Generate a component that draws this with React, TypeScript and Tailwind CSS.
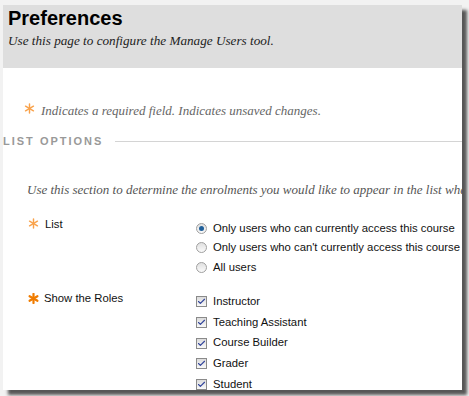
import { Check } from "lucide-react"

// Preferences page for the Manage Users tool, shown as a cropped page with a drop shadow.

const RADIOS = [
    { label: "Only users who can currently access this course", on: true },
    { label: "Only users who can't currently access this course", on: false },
    { label: "All users", on: false },
]

const ROLES = ["Instructor", "Teaching Assistant", "Course Builder", "Grader", "Student"]

const serif = "font-['Liberation_Serif','Times_New_Roman',serif]"
const sans = "font-['Liberation_Sans',Arial,sans-serif]"

// Orange six-armed asterisk; the "unsaved" one is lighter and thinner.
function Star({ solid }: { solid?: boolean }) {
    const color = solid ? "#f07c00" : "#f9a24a"
    const w = solid ? 2.4 : 1.6
    return (
        <svg width="11" height="11" viewBox="0 0 12 12" aria-hidden className="shrink-0">
            <g stroke={color} strokeWidth={w} strokeLinecap="round">
                <line x1="6" y1="1" x2="6" y2="11" />
                <line x1="1.7" y1="3.5" x2="10.3" y2="8.5" />
                <line x1="1.7" y1="8.5" x2="10.3" y2="3.5" />
            </g>
        </svg>
    )
}

function Radio({ on }: { on: boolean }) {
    return (
        <span className="flex h-[11px] w-[11px] shrink-0 items-center justify-center rounded-full border border-[#a0a0a0] bg-gradient-to-b from-[#e0e0e0] to-[#fafafa]">
            {on && <span className="h-[5px] w-[5px] rounded-full bg-[#1f5f9a]" />}
        </span>
    )
}

function Box() {
    return (
        <span className="flex h-[11px] w-[11px] shrink-0 items-center justify-center border border-[#8a8a8a] bg-gradient-to-b from-[#dcdcdc] to-[#f8f8f8]">
            <Check size={9} strokeWidth={3} className="text-[#30439a]" aria-hidden />
        </span>
    )
}

export default function App() {
    return (
        <div className="h-[396px] w-[469px] overflow-hidden bg-[#f2f2f2] pl-[3px] pt-[5px]">
            <div className="h-[385px] w-[459px] overflow-hidden bg-white shadow-[5px_5px_3px_rgba(60,60,60,0.85)]">
                {/* Header */}
                <div className="h-[63px] bg-[#dedede] px-[5px] pt-[1px]">
                    <h1 className={`${sans} text-[20px] font-bold leading-[24px] text-black`}>Preferences</h1>
                    <p className={`${serif} mt-[3px] text-[13.2px] italic leading-[16px] text-[#222]`}>
                        Use this page to configure the Manage Users tool.
                    </p>
                </div>

                {/* Required note */}
                <div className="mt-[35px] flex items-center gap-[6px] pl-[21px]">
                    <span className="-mt-[6px]"><Star /></span>
                    <span className={`${serif} text-[13px] italic leading-[16px] text-[#666]`}>
                        Indicates a required field. Indicates unsaved changes.
                    </span>
                </div>

                {/* Section heading */}
                <div className="mt-[14px] flex items-center gap-[12px]">
                    <span className={`${sans} shrink-0 text-[11px] font-bold tracking-[2px] text-[#999]`}>
                        LIST OPTIONS
                    </span>
                    <div className="h-px flex-1 bg-[#d4d4d4]" />
                </div>

                <p className={`${serif} mt-[32px] whitespace-nowrap pl-[24px] text-[13px] italic leading-[16px] text-[#555]`}>
                    Use this section to determine the enrolments you would like to appear in the list when
                </p>

                {/* List */}
                <div className={`${sans} mt-[18px] flex text-[11.3px] text-[#111]`}>
                    <div className="flex w-[193px] shrink-0 items-center gap-[6px] self-start pl-[25px]">
                        <Star />
                        <span className="leading-[16px]">List</span>
                    </div>
                    <div className="mt-[5px] flex flex-col gap-[4px]">
                        {RADIOS.map((r) => (
                            <div key={r.label} className="flex items-center gap-[6px] whitespace-nowrap leading-[15.5px]">
                                <Radio on={r.on} />
                                {r.label}
                            </div>
                        ))}
                    </div>
                </div>

                {/* Roles */}
                <div className={`${sans} mt-[15px] flex text-[11.3px] text-[#111]`}>
                    <div className="flex w-[193px] shrink-0 items-center gap-[5px] self-start pl-[25px]">
                        <Star solid />
                        <span className="leading-[16px]">Show the Roles</span>
                    </div>
                    <div className="mt-[4px] flex flex-col gap-[5.2px]">
                        {ROLES.map((r) => (
                            <div key={r} className="flex items-center gap-[6px] whitespace-nowrap leading-[15.5px]">
                                <Box />
                                {r}
                            </div>
                        ))}
                    </div>
                </div>
            </div>
        </div>
    )
}
